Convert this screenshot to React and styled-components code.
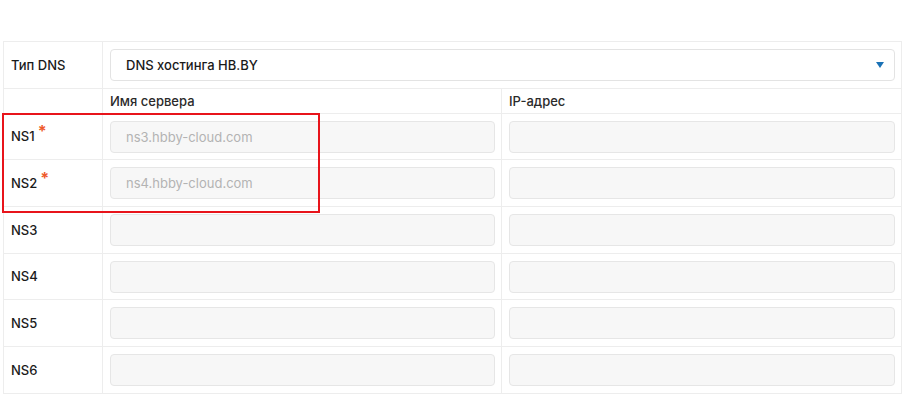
import React from 'react';
import styled, { createGlobalStyle } from 'styled-components';

const GlobalStyle = createGlobalStyle`
  body {
    margin: 0;
    background: #fff;
    font-family: Inter, 'Noto Sans', sans-serif;
    color: #222;
  }
`;

const Page = styled.div`
  padding: 41px 1px 0 3px;
  position: relative;
`;

const Table = styled.table`
  width: 898px;
  border-collapse: collapse;
  table-layout: fixed;
  font-size: 13px;
  td {
    border: 1px solid #ededed;
    vertical-align: middle;
  }
`;

const LabelCell = styled.td`
  width: 99px;
  padding: 0 0 0 7px;
  font-weight: 500;
  color: #1a1a1a;
`;

const FieldCell = styled.td`
  padding: 7px 6px 6.67px 7px;
  height: 32px;
`;

const HeadCell = styled.td`
  padding: 0 7px;
  height: 24px;
  font-weight: 500;
  color: #2a2a2a;
`;

const SelectBox = styled.div`
  height: 32px;
  box-sizing: border-box;
  border: 1px solid #e3e3e3;
  border-radius: 4px;
  background: #fff;
  display: flex;
  align-items: center;
  justify-content: space-between;
  padding: 0 10px 0 15px;
  font-weight: 500;
  color: #1a1a1a;
`;

const Caret = styled.span`
  width: 0;
  height: 0;
  border-left: 4.5px solid transparent;
  border-right: 4.5px solid transparent;
  border-top: 6px solid #1a72b6;
`;

const Input = styled.div`
  height: 32px;
  box-sizing: border-box;
  border: 1px solid #e6e6e6;
  border-radius: 4px;
  background: #f7f7f7;
  display: flex;
  align-items: center;
  padding-left: 15px;
  color: #b3b3b3;
`;

const Star = styled.sup`
  color: #ee5a2b;
  font-size: 16px;
  font-weight: 700;
  margin-left: 3px;
  vertical-align: 4px;
  line-height: 0;
`;

const Highlight = styled.div`
  position: absolute;
  left: 2px;
  top: 113px;
  width: 318px;
  height: 100px;
  box-sizing: border-box;
  border: 2px solid #e8141b;
  pointer-events: none;
`;

const servers = [
  { name: 'NS1', required: true, host: 'ns3.hbby-cloud.com' },
  { name: 'NS2', required: true, host: 'ns4.hbby-cloud.com' },
  { name: 'NS3' },
  { name: 'NS4' },
  { name: 'NS5' },
  { name: 'NS6' },
];

const App = () => {
  return (
    <Page>
      <GlobalStyle />
      <Table>
        <colgroup>
          <col style={{ width: 99 }} />
          <col style={{ width: 399 }} />
          <col style={{ width: 400 }} />
        </colgroup>
        <tbody>
          <tr>
            <LabelCell>Тип DNS</LabelCell>
            <FieldCell colSpan={2}>
              <SelectBox>
                <span>DNS хостинга HB.BY</span>
                <Caret />
              </SelectBox>
            </FieldCell>
          </tr>
          <tr>
            <HeadCell></HeadCell>
            <HeadCell>Имя сервера</HeadCell>
            <HeadCell>IP-адрес</HeadCell>
          </tr>
          {servers.map((s) => (
            <tr key={s.name}>
              <LabelCell>
                {s.name}
                {s.required && <Star>*</Star>}
              </LabelCell>
              <FieldCell>
                <Input>{s.host || ''}</Input>
              </FieldCell>
              <FieldCell>
                <Input />
              </FieldCell>
            </tr>
          ))}
        </tbody>
      </Table>
      <Highlight />
    </Page>
  );
};

export default App;
